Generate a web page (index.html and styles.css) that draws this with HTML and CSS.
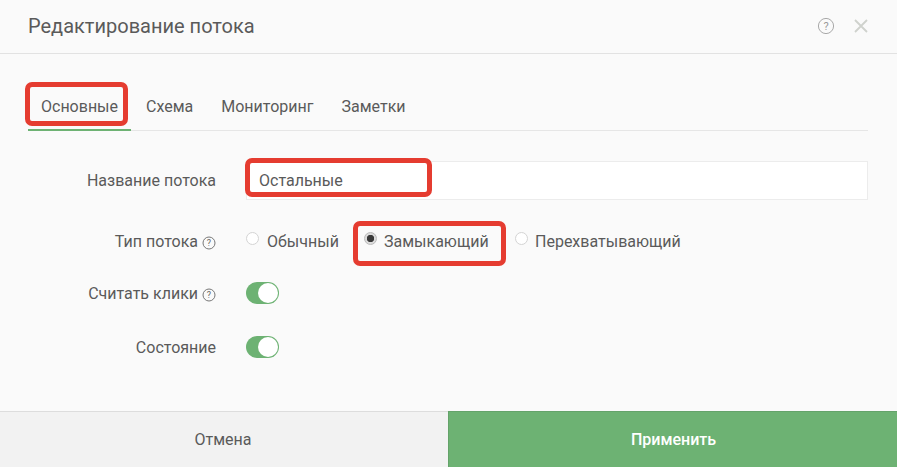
FILE: index.html
```html
<!DOCTYPE html>
<html lang="ru">
<head>
<meta charset="utf-8">
<title>Редактирование потока</title>
<link rel="stylesheet" href="styles.css">
</head>
<body>
<div class="dialog">
  <header class="head">
    <h1 class="title">Редактирование потока</h1>
    <div class="head-icons">
      <svg class="help-lg" viewBox="0 0 18 18"><circle cx="9" cy="9" r="7.6" fill="none" stroke="#a9a9a9" stroke-width="1"/><text x="9" y="12.6" text-anchor="middle" class="help-q">?</text></svg>
      <svg class="close" viewBox="0 0 14 14"><path d="M1 1 13 13M13 1 1 13" stroke="#cfd2cd" stroke-width="1.8" fill="none"/></svg>
    </div>
  </header>
  <main class="body">
    <nav class="tabs">
      <a class="tab tab-active">Основные<span class="mark mark-tab"></span></a>
      <a class="tab">Схема</a>
      <a class="tab">Мониторинг</a>
      <a class="tab">Заметки</a>
    </nav>
    <div class="form">
      <div class="row row-name">
        <div class="label">Название потока</div>
        <div class="field input">Остальные<span class="mark mark-input"></span></div>
      </div>
      <div class="row row-type">
        <div class="label label-low">Тип потока <svg class="help" viewBox="0 0 14 14"><circle cx="7" cy="7" r="6" fill="none" stroke="#777" stroke-width="1"/><text x="7" y="10" text-anchor="middle" class="help-q-sm">?</text></svg></div>
        <div class="field radios">
          <label class="radio r1"><span class="dot"></span>Обычный</label>
          <label class="radio r2"><span class="dot dot-on"></span>Замыкающий<span class="mark mark-radio"></span></label>
          <label class="radio r3"><span class="dot"></span>Перехватывающий</label>
        </div>
      </div>
      <div class="row row-clicks">
        <div class="label label-low">Считать клики <svg class="help" viewBox="0 0 14 14"><circle cx="7" cy="7" r="6" fill="none" stroke="#777" stroke-width="1"/><text x="7" y="10" text-anchor="middle" class="help-q-sm">?</text></svg></div>
        <div class="field"><span class="toggle"><span class="knob"></span></span></div>
      </div>
      <div class="row row-state">
        <div class="label label-low">Состояние</div>
        <div class="field"><span class="toggle"><span class="knob"></span></span></div>
      </div>
    </div>
  </main>
  <footer class="foot">
    <button class="btn btn-cancel">Отмена</button>
    <button class="btn btn-apply">Применить</button>
  </footer>
</div>
</body>
</html>
```
FILE: styles.css
```css
* { box-sizing: border-box; }
html, body { margin: 0; height: 100%; }
body { background: #fafafa; font-family: Roboto, "Liberation Sans", sans-serif; color: #5a5a5a; overflow: hidden; }
.dialog { width: 897px; height: 467px; display: flex; flex-direction: column; }
.head { height: 54px; flex: none; border-bottom: 1px solid #e2e2e2; display: flex; align-items: center; justify-content: space-between; padding: 0 29px 2px 28px; }
.title { margin: 0; font-size: 20px; font-weight: 400; color: #5a5a5a; }
.head-icons { display: flex; align-items: center; gap: 19px; }
.help-lg { width: 18px; height: 18px; display: block; }
.help-q { font: 11px Roboto, sans-serif; fill: #999; }
.help-q-sm { font: 9px Roboto, sans-serif; fill: #666; }
.close { width: 14px; height: 14px; display: block; }
.body { flex: 1; padding: 29px 29px 0 28px; }
.tabs { display: flex; height: 48px; border-bottom: 1px solid #e6e6e6; }
.tab { position: relative; height: 48px; padding: 15px 13px 0; margin-right: 2px; font-size: 16px; line-height: 18px; color: #5a5a5a; white-space: nowrap; }
.tab-active { border-bottom: 2px solid #6db273; }
.mark { position: absolute; border: 5px solid #e53c30; border-radius: 7px; pointer-events: none; }
.mark-tab { left: -3px; top: -1px; width: 103px; height: 44px; }
.form { margin-top: 30px; }
.row { display: flex; align-items: center; }
.row-name { height: 39px; }
.row-type { height: 39px; margin-top: 21px; }
.row-clicks { height: 22px; margin-top: 22px; }
.row-state { height: 22px; margin-top: 32px; }
.label { width: 188px; text-align: right; font-size: 16px; line-height: 18px; color: #5a5a5a; white-space: nowrap; }
.label-low { padding-top: 2px; }
.help { width: 14px; height: 14px; vertical-align: -3px; }
.field { position: relative; margin-left: 30px; flex: 1; font-size: 16px; line-height: 18px; }
.input { height: 39px; background: #fff; border: 1px solid #ececec; padding: 10px 12px 0; color: #5a5a5a; }
.mark-input { left: -2px; top: -4px; width: 187px; height: 39px; }
.radios { display: flex; align-items: center; height: 39px; padding-top: 2px; }
.radio { position: relative; display: flex; align-items: center; white-space: nowrap; color: #5a5a5a; }
.r1 { width: 118px; }
.r2 { width: 151px; }
.dot { width: 13px; height: 13px; border-radius: 50%; border: 1px solid #d4d4d4; background: #fff; margin-right: 8px; position: relative; top: -3px; }
.r2 .dot { margin-right: 7px; }
.r3 .dot { margin-right: 7px; }
.dot-on { border-color: #bbb; background: radial-gradient(circle, #3a3a3a 0 3.4px, #dcdcdc 4px); }
.mark-radio { left: -11px; top: -12px; width: 153px; height: 45px; }
.toggle { display: block; width: 33px; height: 22px; border-radius: 11px; background: #6db273; position: relative; }
.knob { position: absolute; right: 1px; top: 1px; width: 20px; height: 20px; border-radius: 50%; background: #fff; }
.foot { flex: none; height: 56px; display: flex; }
.btn { border: 0; margin: 0; padding: 0; font: 16px Roboto, sans-serif; }
.btn-cancel { width: 448px; background: #f2f2f2; color: #5a5a5a; border-top: 1px solid #ddd; padding-right: 2px; }
.btn-apply { width: 449px; background: #6db273; color: #fff; font-weight: 500; border-top: 1px solid #64a36a; border-left: 1px solid #64a36a; padding-left: 1px; }
```
